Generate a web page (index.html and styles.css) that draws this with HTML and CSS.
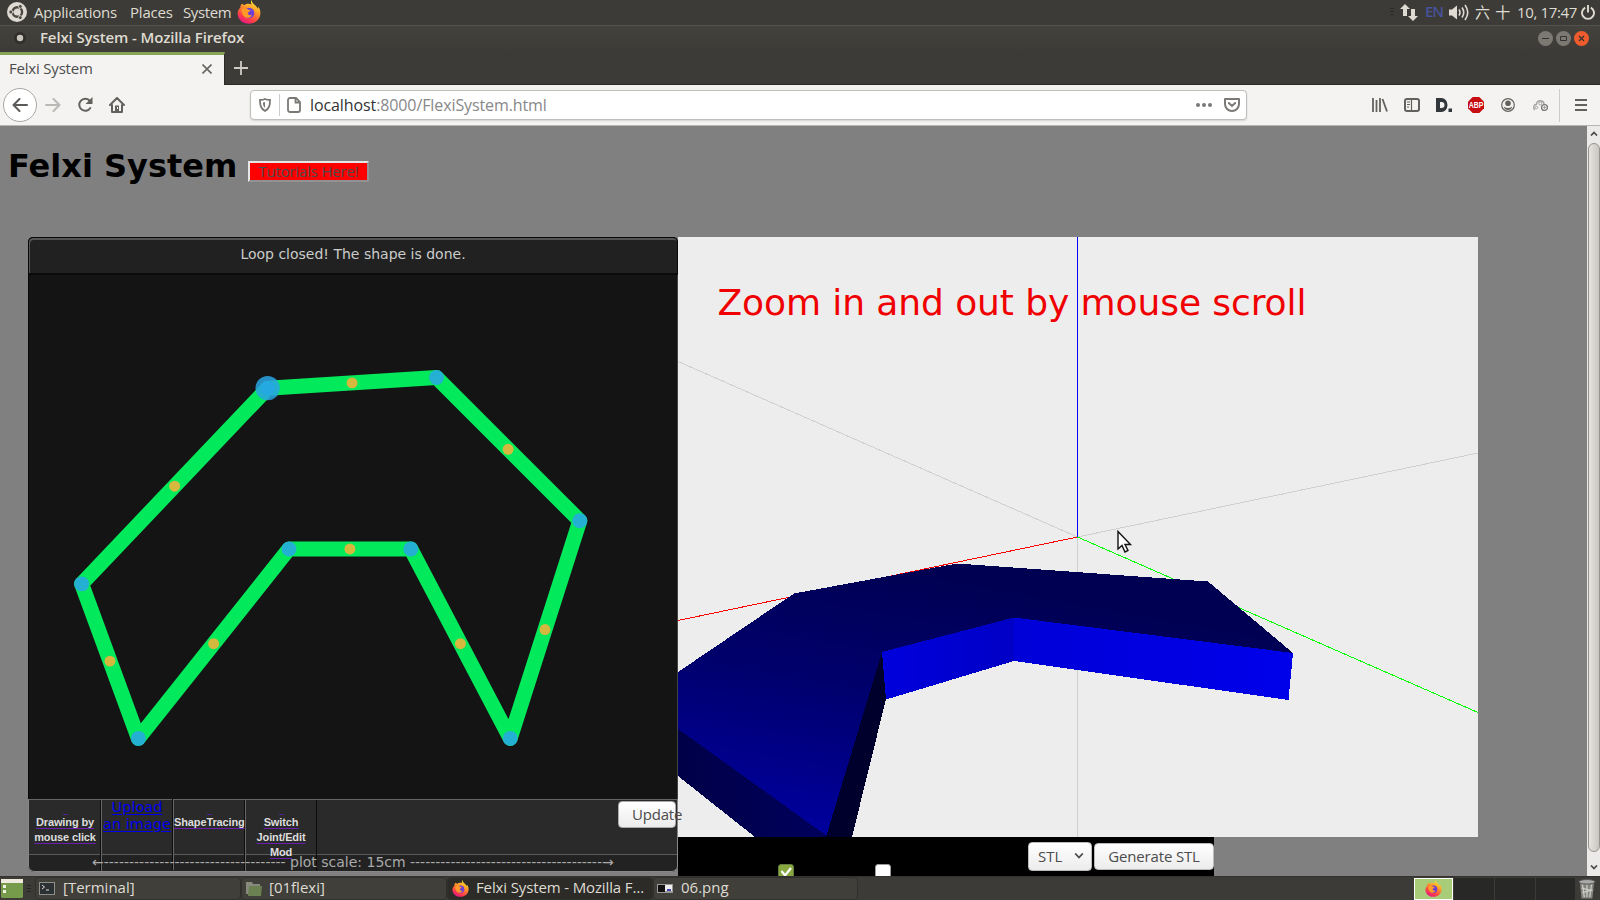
FILE: index.html
```html
<!DOCTYPE html>
<html lang="en">
<head>
<meta charset="utf-8">
<title>Felxi System</title>
<link rel="stylesheet" href="styles.css">
</head>
<body>
<svg width="0" height="0" class="defs">
  <defs>
    <linearGradient id="fxBody" x1="0.8" y1="0" x2="0.3" y2="1"><stop offset="0" stop-color="#fff13a"/><stop offset=".4" stop-color="#ff9a28"/><stop offset=".75" stop-color="#ff4046"/><stop offset="1" stop-color="#e31587"/></linearGradient>
    <symbol id="firefox" viewBox="0 0 24 24">
      <path fill="url(#fxBody)" d="M14.6 0c-1 1.600-.8 3.100 0 4.400-3-1-5.600-.7-7.200.8L5 3.800C3.600 4.900 3.300 6.500 3.400 7.600 1.300 9.800.500 12 .6 14c.4 5.700 5 9.800 11.300 9.800C18.600 23.800 23.400 19 23.400 13c0-3-1-5-2.400-6.300.2 1 .1 1.700 0 2.100C19.200 5 15 4 14.600 0z"/>
      <circle cx="12" cy="13" r="5.300" fill="#6b3fd8"/>
      <path fill="#ff9a28" d="M4.500 9.500c3-2 5.500-1.500 7 .2 1 .2 2 .3 2 .8 0 1-2 1-2.500 2.300-.5 2 2 3 4 2.100-1 2.500-4 3.600-6.500 2.600C5.500 16 4.500 12.500 4.500 9.500z"/>
    </symbol>
  </defs>
</svg>
<div class="desktop">
  <header class="panel">
    <svg class="ubuntu" width="20" height="20" viewBox="0 0 20 20"><circle cx="10" cy="10" r="10" fill="#dfdbd2"/><circle cx="10.300" cy="10" r="4.800" fill="none" stroke="#4a4842" stroke-width="2.400"/><path d="M10.300 10 4 10M10.300 10l3.500-6M10.300 10l3.500 6" stroke="#dfdbd2" stroke-width="1"/><g fill="#4a4842" stroke="#dfdbd2" stroke-width=".8"><circle cx="3.800" cy="10" r="1.900"/><circle cx="13.300" cy="4.400" r="1.900"/><circle cx="13.300" cy="15.600" r="1.900"/></g></svg>
    <span class="m m1">Applications</span><span class="m m2">Places</span><span class="m m3">System</span>
    <svg class="fx" width="24" height="24"><use href="#firefox"/></svg>
    <div class="tray">
      <svg class="grip" width="4" height="8" viewBox="0 0 4 8"><path d="M0 .5h4M0 3.500h4M0 6.500h4" stroke="#2c2b28"/></svg>
      <svg width="18" height="17" viewBox="0 0 18 17" fill="#dfdbd2"><path d="M5 0l5 5H7v7H3V5H0zM13 17l-5-5h3V5h4v7h3z"/></svg>
      <span class="lang">EN</span>
      <svg class="vol" width="20" height="17" viewBox="0 0 20 17"><path d="M0 5.500h3L8 1.500v14L3 11.500H0z" fill="#dfdbd2"/><path d="M10 5.500q2 3 0 6M13 3.500q3.500 5 0 10M16 1q5.500 7.500 0 15" fill="none" stroke="#dfdbd2" stroke-width="1.600"/></svg>
      <span class="clock"><span class="cjk">六 十</span><span class="time">10, 17:47</span></span>
      <svg width="14" height="15" viewBox="0 0 14 15"><path d="M4.200 2.600a6 6 0 1 0 5.600 0M7 0v7.500" fill="none" stroke="#dfdbd2" stroke-width="1.900"/></svg>
    </div>
  </header>

  <div class="titlebar">
    <svg width="14" height="14" viewBox="0 0 14 14"><circle cx="7" cy="7" r="6" fill="#302f2c"/><circle cx="7" cy="7" r="3.200" fill="#c9c6be"/></svg>
    <span class="wtitle">Felxi System - Mozilla Firefox</span>
    <div class="wbtns">
      <svg width="15" height="15" viewBox="0 0 15 15"><circle cx="7.500" cy="7.500" r="7.500" fill="#7b7972"/><path d="M4 7.500h7" stroke="#33322e"/></svg>
      <svg width="15" height="15" viewBox="0 0 15 15"><circle cx="7.500" cy="7.500" r="7.500" fill="#7b7972"/><path d="M4.500 5.500h6v4h-6z" fill="none" stroke="#33322e"/></svg>
      <svg width="15" height="15" viewBox="0 0 15 15"><circle cx="7.500" cy="7.500" r="7.500" fill="#ee5c2e"/><path d="M5 5l5 5M10 5l-5 5" stroke="#33322e" stroke-width="1.200"/></svg>
    </div>
  </div>

  <div class="tabs">
    <div class="tab"><span class="tabname">Felxi System</span><svg width="10" height="10" viewBox="0 0 10 10"><path d="M.5.5l9 9M9.500.5l-9 9" stroke="#666460" stroke-width="1.600"/></svg></div>
    <svg class="plus" width="14" height="14" viewBox="0 0 14 14"><path d="M7 0v14M0 7h14" stroke="#cfccc5" stroke-width="1.800"/></svg>
  </div>

  <nav class="navbar">
    <div class="back"><svg width="16" height="14" viewBox="0 0 16 14"><path d="M15 7H1.500M7.500 1l-6 6 6 6" fill="none" stroke="#5c5a57" stroke-width="2" stroke-linecap="round" stroke-linejoin="round"/></svg></div>
    <svg class="fwd" width="16" height="14" viewBox="0 0 16 14"><path d="M1 7h13.500M8.500 1l6 6-6 6" fill="none" stroke="#bab8b5" stroke-width="2" stroke-linecap="round" stroke-linejoin="round"/></svg>
    <svg class="reload" width="16" height="16" viewBox="0 0 16 16"><path d="M13.300 11A6 6 0 1 1 12.500 3.500" fill="none" stroke="#63615e" stroke-width="2" stroke-linecap="round"/><path d="M15.500 0v7h-7z" fill="#63615e"/></svg>
    <svg class="home" width="16" height="16" viewBox="0 0 16 16"><path d="M1 8l7-7 7 7M3 8v7h10V8" fill="none" stroke="#63615e" stroke-width="2" stroke-linejoin="round" stroke-linecap="round"/><path d="M6 15V8.500h4V15z" fill="#63615e"/><path d="M8.500 10v2" stroke="#fff"/></svg>
    <div class="urlbar">
      <svg class="shield" width="12" height="14" viewBox="0 0 12 14"><path d="M6 1c1.500.8 3.500 1 5 1 0 5-.5 8.500-5 11C1.500 10.500 1 7 1 2c1.500 0 3.500-.2 5-1z" fill="none" stroke="#7b7976" stroke-width="1.800"/><path d="M6 4v6C4.300 8.500 4 7 4 4.500z" fill="#7b7976"/></svg>
      <i class="sep"></i>
      <svg width="14" height="16" viewBox="0 0 14 16"><path d="M3 1h6l4 4v8a2 2 0 0 1-2 2H3a2 2 0 0 1-2-2V3a2 2 0 0 1 2-2zM8.500 1v4.500H13" fill="none" stroke="#7b7976" stroke-width="1.800"/></svg>
      <span class="url"><b>localhost</b>:8000/FlexiSystem.html</span>
      <svg class="dots" width="16" height="4" viewBox="0 0 16 4" fill="#7b7976"><circle cx="2" cy="2" r="2"/><circle cx="8" cy="2" r="2"/><circle cx="14" cy="2" r="2"/></svg>
      <svg width="16" height="14" viewBox="0 0 16 14"><path d="M1 1h14v5a7 7 0 0 1-14 0z" fill="none" stroke="#7b7976" stroke-width="2" stroke-linejoin="round"/><path d="M4.800 5L8 8l3.200-3" fill="none" stroke="#7b7976" stroke-width="2" stroke-linecap="round"/></svg>
    </div>
    <div class="tools">
      <svg width="16" height="14" viewBox="0 0 16 14"><path d="M1 0v14M4.500 2v12M8 0v14M10.500 1l4.500 12.500" stroke="#63615e" stroke-width="1.800"/></svg>
      <svg width="16" height="14" viewBox="0 0 16 14"><rect x="1" y="1" width="14" height="12" rx="2" fill="none" stroke="#63615e" stroke-width="2"/><path d="M7.500 1v12M3 4h3M3 6.500h3M3 9h2" stroke="#63615e" stroke-width="1.200"/></svg>
      <svg width="16" height="14" viewBox="0 0 16 14" fill="#32373c"><path fill-rule="evenodd" d="M0 0h5.500a6 7 0 0 1 0 14H0zM4 4v6h1.500a3 3 0 0 0 0-6z"/><path d="M12.500 10.500H16V14h-3.500z"/></svg>
      <svg width="16" height="16" viewBox="0 0 16 16"><path d="M4.700 0h6.600L16 4.700v6.600L11.300 16H4.700L0 11.300V4.700z" fill="#c70d0f"/><text x="8" y="11" text-anchor="middle" textLength="14.500" lengthAdjust="spacingAndGlyphs" font-size="8.500" class="abp" fill="#fff">ABP</text></svg>
      <svg width="16" height="14" viewBox="-1 0 16 14"><circle cx="7" cy="7" r="6.300" fill="none" stroke="#63615e" stroke-width="1.200"/><circle cx="7" cy="5.200" r="2.800" fill="#63615e"/><path d="M2.800 8.500q4.200 3 8.400 0Q10.500 12 7 12T2.800 8.500z" fill="#63615e"/></svg>
      <svg class="cloud" width="16" height="12" viewBox="0 0 16 12" fill="none" stroke="#a5a3a0"><path d="M3 11A3.200 3.200 0 0 1 4.500 5.200a3.900 3.900 0 0 1 7.700-.2" stroke-width="1.400"/><circle cx="8.300" cy="4.500" r="1.500"/><circle cx="4.500" cy="8.500" r="1.300"/><circle cx="12.500" cy="8.500" r="2.900" stroke="#797774" stroke-width="1.300"/><circle cx="12.500" cy="8.500" r=".7" stroke="#797774"/></svg>
    </div>
    <i class="navsep"></i>
    <svg class="burger" width="12" height="12" viewBox="0 0 12 12"><path d="M0 1h12M0 6h12M0 11h12" stroke="#63615e" stroke-width="2"/></svg>
  </nav>

  <main class="page">
    <div class="content">
      <div class="heading"><h1>Felxi System</h1><button class="tut">Tutorials Here!</button></div>
      <div class="work">
        <section class="editor">
          <div class="msg">Loop closed! The shape is done.</div>
          <svg class="canvas" width="650" height="526" viewBox="28.500 274.500 650 526">
            <path d="M267.900 387.800L437.300 377 581 520.700 511.200 739 411.500 549H289.300L138.200 739 81.300 584z" fill="none" stroke="#02ea5b" stroke-width="15" stroke-linejoin="round"/>
            <circle cx="267.900" cy="387.700" r="12.200" fill="#29a4e2" opacity=".85"/>
            <g fill="#24b0d2"><circle cx="267.900" cy="387.700" r="7.500" fill="#24a9e0"/><circle cx="437.300" cy="377" r="7.500"/><circle cx="581" cy="520.700" r="7.500"/><circle cx="511.200" cy="739" r="7.500"/><circle cx="411.500" cy="549" r="7.500"/><circle cx="289.300" cy="549" r="7.500"/><circle cx="138.200" cy="739" r="7.500"/><circle cx="81.300" cy="584" r="7.500"/></g>
            <g fill="#d5b83e"><circle cx="352.600" cy="382.400" r="5.500"/><circle cx="509.100" cy="449" r="5.500"/><circle cx="546.100" cy="629.800" r="5.500"/><circle cx="461.300" cy="644" r="5.500"/><circle cx="350.400" cy="549" r="5.500"/><circle cx="213.700" cy="644" r="5.500"/><circle cx="109.700" cy="661.500" r="5.500"/><circle cx="174.600" cy="486" r="5.500"/></g>
          </svg>
          <div class="bar">
            <div class="cell"><a><u></u>Drawing by<br>mouse click</a></div>
            <div class="cell up"><a>Upload<br>an image</a></div>
            <div class="cell"><a><u></u>ShapeTracing</a></div>
            <div class="cell"><a><u></u>Switch<br>Joint/Edit<br>Mod</a></div>
            <button class="update"><span>Update</span></button>
            <div class="scale"><span class="arr">←------------------------------------</span><span class="ps">plot scale: 15cm</span><span class="arr">--------------------------------------→</span></div>
          </div>
        </section>
        <section class="viewer">
          <svg class="scene" width="800" height="600" viewBox="678 237 800 600">
            <defs>
              <linearGradient id="top" gradientUnits="userSpaceOnUse" x1="900" y1="565" x2="850" y2="840"><stop offset="0" stop-color="#000052"/><stop offset=".45" stop-color="#00006c"/><stop offset="1" stop-color="#00009e"/></linearGradient>
              <linearGradient id="s1" x1="0" x2="1"><stop offset="0" stop-color="#0000dc"/><stop offset="1" stop-color="#0000c6"/></linearGradient>
              <linearGradient id="s2" x1="0" x2="1"><stop offset="0" stop-color="#0000d8"/><stop offset="1" stop-color="#0000ea"/></linearGradient>
              <linearGradient id="s3" x1="0" x2="1"><stop offset="0" stop-color="#000048"/><stop offset="1" stop-color="#00005c"/></linearGradient>
            </defs>
            <path fill="#ededed" d="M678 237h800v600H678z"/>
            <g fill="none" shape-rendering="crispEdges"><path d="M678 361.500L1077.500 537 1478 453M1077.500 537v300" stroke="#d0d0d0"/><path d="M1077.500 237v300" stroke="#00f"/><path d="M1077.500 537L678 620.500" stroke="#f00"/><path d="M1077.500 537L1478 712.500" stroke="#0f0"/></g>
            <g shape-rendering="crispEdges">
              <path fill="url(#top)" d="M678 672L794 593.500 957 563.500 1208 581.500 1293 653 1291 656 1014 622 884 657 829 837 827 837 678 729z"/>
              <path fill="url(#s3)" d="M678 729l149 107v1h-72l-77-61z"/>
              <path fill="#00002c" d="M882 652l4 47-34 138h-26z"/>
              <path fill="url(#s1)" d="M882 652l132-34.500v43.500L886 699.500z"/>
              <path fill="url(#s2)" d="M1014 617.500l279 35.500-4.500 47L1014 661z"/>
            </g>
            <text class="zoomtext" x="717.500" y="315" textLength="589">Zoom in and out by mouse scroll</text>
            <path d="M1118 531.500v17.500l4-3.500 3 6.500 3-1.500-3-6h5.500z" fill="#fff" stroke="#111" stroke-width="1.400"/>
          </svg>
          <div class="controls">
            <i class="ck on"><svg width="14" height="14" viewBox="0 0 14 14"><path d="M2.500 6l3.500 4.500 6-7.500" fill="none" stroke="#fff" stroke-width="2.200"/></svg></i><i class="ck"></i>
            <button class="sel">STL<svg width="10" height="6" viewBox="0 0 10 6"><path d="M1.200.5L5 4.500 8.800.5" fill="none" stroke="#4c4c4c" stroke-width="1.800"/></svg></button>
            <button class="gen">Generate STL</button>
          </div>
        </section>
      </div>
    </div>
    <div class="scroll"><svg width="8" height="5" viewBox="0 0 8 5"><path d="M1 4.500l3-3 3 3" fill="none" stroke="#4a4a48" stroke-width="1.700"/></svg><i class="thumb"></i><svg width="8" height="5" viewBox="0 0 8 5"><path d="M1 .5l3 3 3-3" fill="none" stroke="#4a4a48" stroke-width="1.700"/></svg></div>
  </main>

  <footer class="taskbar">
    <svg class="show" width="22" height="20" viewBox="0 0 22 20"><rect width="22" height="19" rx="1.500" fill="#759b4b"/><path d="M0 0h22v4H0z" fill="#eeeade"/><path d="M2 6h3v3H2zM2 11h3v3H2z" fill="#eef3e4"/></svg>
    <svg class="grip2" width="4" height="8" viewBox="0 0 4 8"><path d="M0 .5h4M0 3.500h4M0 6.500h4" stroke="#262522"/></svg>
    <div class="task t1"><svg width="16" height="14" viewBox="0 0 16 14"><rect x=".5" y=".5" width="15" height="12" fill="#2c3133" stroke="#8e8e8a"/><path d="M3 3l2.500 2L3 7M7 8h3" fill="none" stroke="#ddd"/></svg><span>[Terminal]</span></div>
    <div class="task t2"><svg width="16" height="14" viewBox="0 0 16 14"><path d="M0 0h6l1 2h7v10H0z" fill="#888a80"/><path d="M3 4h13l-1 10H2z" fill="#6b8152"/></svg><span>[01flexi]</span></div>
    <div class="task t3"><svg width="17" height="17"><use href="#firefox"/></svg><span>Felxi System - Mozilla F…</span></div>
    <div class="task t4"><svg width="16" height="9" viewBox="0 0 16 9"><path d="M0 0h16v9H0z" fill="#999"/><path d="M1 1h7v7H1z" fill="#111"/><path d="M8 1h7v6H8z" fill="#eee"/><path d="M10 5h4v2h-4z" fill="#44a"/></svg><span>06.png</span></div>
    <div class="pager"><div class="ws cur"><svg width="17" height="17"><use href="#firefox"/></svg></div><div class="ws"></div><div class="ws"></div><div class="ws"></div></div>
    <svg class="trash" width="18" height="22" viewBox="0 0 20 22"><path d="M2 3h16l-2 18.500H4z" fill="#85857f"/><path d="M5 6l2 14M10 6v14M15 6l-2 14M4 10l12 3M5 15l11-3" stroke="#cfcfca" stroke-width="1.300"/><ellipse cx="10" cy="3" rx="9" ry="2.500" fill="#aaa" stroke="#555"/></svg>
  </footer>
</div>
</body>
</html>
```
FILE: styles.css
```css
* { box-sizing: border-box; }
body { margin: 0; font-family: "Open Sans", "Noto Sans", sans-serif; font-size: 15px; overflow: hidden; }
svg { display: block; flex: none; }
.defs { position: absolute; }
button { font: inherit; margin: 0; padding: 0; }
span, button { white-space: nowrap; }
.desktop { width: 1600px; height: 900px; display: flex; flex-direction: column; overflow: hidden; }

.panel { height: 25px; flex: none; background: #3c3b37; color: #dfdbd2; display: flex; align-items: center; padding: 0 5px 1px 7px; }
.m { padding-bottom: 1px; }
.m1 { margin-left: 7px; width: 96px; letter-spacing: -.2px; }
.m2 { width: 53px; letter-spacing: -.2px; }
.m3 { width: 54px; letter-spacing: -.4px; }
.tray { margin-left: auto; display: flex; align-items: center; }
.grip { margin-right: 6px; }
.lang { margin: 0 6px 2px 7px; color: #46529c; font-size: 15px; width: 18px; line-height: 18px; font-weight: 600; letter-spacing: -1.200px; }
.vol { margin-right: 6px; }
.clock { display: flex; align-items: center; margin-right: 5px; }
.cjk { font-family: "Noto Sans CJK SC", sans-serif; width: 42px; line-height: 20px; padding-bottom: 1px; word-spacing: 2px; }
.time { width: 59px; padding-bottom: 1px; letter-spacing: -.35px; }

.titlebar { height: 27px; flex: none; border-top: 1px solid #53524c; background: linear-gradient(#43423d, #3c3b37); display: flex; align-items: center; padding: 0 11px 2px 13px; color: #dfdbd2; font-weight: 600; }
.wtitle { margin-left: 13px; padding-bottom: 2px; letter-spacing: -.12px; }
.wbtns { margin-left: auto; display: flex; gap: 3px; }

.tabs { height: 33px; flex: none; background: #3c3b37; border-bottom: 1px solid #2b2a27; display: flex; align-items: center; }
.tab { width: 225px; height: 33px; align-self: flex-start; background: #f4f3f2; border-top: 3px solid #86a455; border-right: 1px solid #2b2a27; display: flex; align-items: center; justify-content: space-between; padding: 0 12px 3px 9px; color: #4c4c4c; }
.tabname { letter-spacing: -.2px; padding-bottom: 2px; }
.plus { margin-left: 9px; }

.navbar { height: 41px; flex: none; background: #f4f3f2; border-bottom: 1px solid #b8b6b2; display: flex; align-items: center; padding-left: 3px; }
.back { width: 34px; height: 34px; border: 1px solid #aaa8a4; border-radius: 50%; background: #fff; display: flex; align-items: center; justify-content: center; }
.fwd { margin-left: 8px; }
.reload { margin-left: 16px; }
.home { margin-left: 16px; }
.urlbar { width: 997px; height: 30px; margin-left: 125px; border: 1px solid #c0beba; border-radius: 4px; background: #fff; display: flex; align-items: center; padding: 0 6px 0 8px; box-shadow: 0 1px 2px #0002; }
.sep { width: 1px; height: 22px; background: #ccc; margin: 0 7px 0 8px; }
.url { margin-left: 9px; font-size: 16px; color: #888; letter-spacing: -.1px; }
.url b { font-weight: 400; color: #333; }
.dots { margin: 0 12px 0 auto; }
.tools { display: flex; align-items: center; gap: 16px; margin-left: 125px; }
.abp { font-family: "Liberation Sans", sans-serif; font-weight: 700; }
.navsep { width: 1px; height: 33px; background: #ccc; margin: 0 15px 0 11px; }

.page { height: 750px; flex: none; display: flex; background: #808080; overflow: hidden; }
.content { width: 1587px; }
.heading { height: 111px; display: flex; padding: 22px 0 0 8px; font-family: "DejaVu Sans", sans-serif; }
h1 { margin: 0; font-size: 32px; line-height: 36px; width: 240px; white-space: nowrap; }
.tut { margin-top: 13px; width: 121px; height: 21px; background: #f00; border: 2px outset #e6e6e6; color: #4c4c4c; font: 15px/15px "Open Sans", sans-serif; letter-spacing: -.2px; }
.work { display: flex; margin-left: 28px; }
.editor { width: 650px; height: 635px; background: #141414; border-radius: 5px 5px 6px 6px; display: flex; flex-direction: column; flex: none; }
.msg { height: 38px; flex: none; background: #212121; border: 1px solid #0a0a0a; border-bottom-width: 2px; border-radius: 5px 5px 0 0; box-shadow: inset 1px 2px 0 #555; color: #ccc; text-align: center; font: 14px/32px "DejaVu Sans", sans-serif; }
.canvas { height: 525px; border-left: 1px solid #080808; border-right: 1px solid #444; }
.bar { height: 73px; margin-top: -1px; border: 1px solid #888; border-top-color: #666; border-radius: 0 0 6px 6px; background: linear-gradient(#2a2a2a 54px, #5a5a5a 54px, #5a5a5a 55px, #222 55px); display: grid; grid-template-columns: repeat(4, 72px) 1fr 60px; position: relative; }
.cell { height: 71px; border-right: 1px solid #0c0c0c; box-shadow: 1px 0 #686868; text-align: center; font: bold 11px/15px "Liberation Sans", sans-serif; letter-spacing: -.12px; color: #ddd; padding: 15px 0 0 1px; white-space: nowrap; }
.cell:nth-child(4) { box-shadow: none; }
.cell a { text-decoration: underline; text-decoration-color: #6a1fb0; text-underline-offset: 2px; }
.cell u { display: block; width: 5px; height: 1px; background: #5a1f90; margin: -1px auto 0; }
.cell.up { font: 14.500px/17px "DejaVu Sans", sans-serif; letter-spacing: 0; color: #00e; padding-top: 0; margin-top: -1px; }
.cell.up a { text-decoration-color: #00e; }
.update { grid-column: 6; width: 58px; height: 27px; margin: 1px 0 0 1px; background: linear-gradient(#fff, #ececec); border: 1px solid #aaa; border-radius: 4px; text-align: left; padding: 0 0 2px 13px; color: #4c4c4c; letter-spacing: -.2px; }
.scale { position: absolute; left: 63px; top: 54px; display: flex; align-items: center; color: #aaa; font: 14px/17px "DejaVu Sans", sans-serif; }
.arr { width: 198px; }
.ps { width: 120px; }
.arr:last-child { width: 206px; }

.viewer { width: 800px; }
.zoomtext { font: 36px "DejaVu Sans", sans-serif; fill: #f00000; }
.controls { width: 536px; height: 39px; background: #000; display: flex; align-items: flex-start; padding: 5px 0 0 100px; overflow: hidden; }
.ck { width: 16px; height: 16px; margin: 22px 81px 0 0; background: #fff; border: 1px solid #999; border-radius: 3px; flex: none; }
.ck.on { background: #86a83e; border-color: #66793f; }
.sel, .gen { border: 1px solid #bbb; border-radius: 4px; background: linear-gradient(#fff, #ececec); color: #4c4c4c; height: 29px; }
.sel { width: 64px; margin-left: 56px; display: flex; align-items: center; justify-content: space-between; padding: 0 7px 1px 9px; }
.gen { width: 120px; height: 27px; margin: 1px 0 0 2px; padding-bottom: 2px; letter-spacing: -.15px; }
.scroll { width: 13px; background: #eceae8; display: flex; flex-direction: column; align-items: center; justify-content: space-between; padding: 5px 0 6px; }
.thumb { width: 12px; height: 709px; margin-bottom: 7px; border: 1px solid #96928c; border-radius: 6px; background: linear-gradient(90deg, #e6e4e0, #c9c5c0); }

.taskbar { height: 24px; flex: none; background: #3c3b37; display: flex; align-items: center; color: #dfdbd2; border-top: 1px solid #33322e; padding-left: 1px; }
.grip2 { margin: 0 4px 0 4px; }
.task { height: 23px; display: flex; align-items: center; border: 1px solid #31302d; border-radius: 4px; background: #403f3a; padding-left: 4px; }
.task span { margin-left: 8px; padding-bottom: 3px; }
.t1, .t2 { width: 206px; }
.t1 { padding-left: 3px; letter-spacing: 0; }
.t2 { padding-left: 4px; }
.t2 span { margin-left: 7px; }
.t3 { width: 206px; background: #2c2b28; }
.t3 span { margin-left: 7px; letter-spacing: -.13px; }
.t4 { width: 205px; padding-left: 3px; }
.pager { display: flex; margin-left: auto; gap: 1px; background: #3c3b37; }
.ws { width: 40px; height: 22px; background: #282826; }
.ws:last-child { width: 39px; }
.ws.cur { width: 39px; background: #a9cc78; border: 1px solid #fff; display: flex; align-items: center; justify-content: center; }
.trash { margin: 0 4px 0 3px; }
```
